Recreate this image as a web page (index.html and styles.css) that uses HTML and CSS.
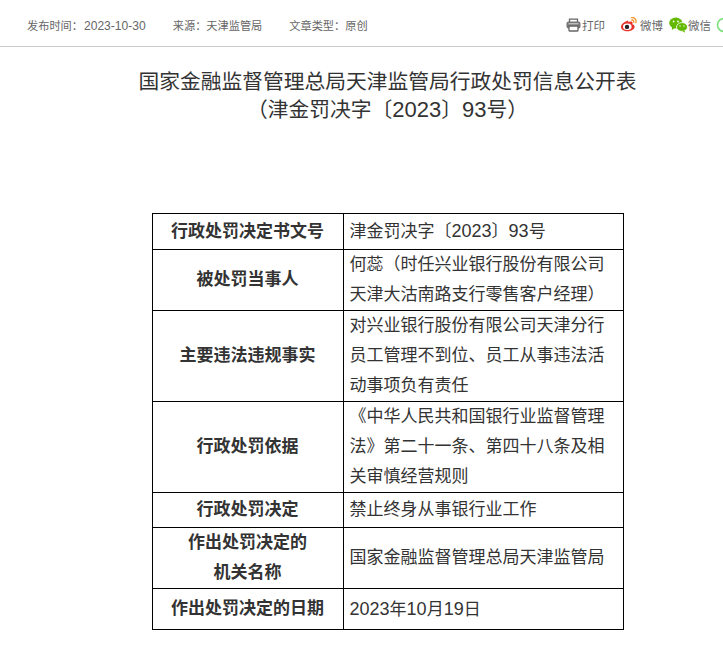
FILE: index.html
```html
<!DOCTYPE html>
<html lang="zh">
<head>
<meta charset="utf-8">
<title>行政处罚信息公开表</title>
<link rel="stylesheet" href="styles.css">
</head>
<body>
<header class="bar">
  <div class="meta">
    <span>发布时间：<span class="num">2023-10-30</span></span>
    <span>来源：天津监管局</span>
    <span>文章类型：原创</span>
  </div>
  <div class="share">
    <span class="share-item print">
      <svg width="15" height="14" viewBox="0 0 15 14"><path d="M3.500 4V1.200h8V4" fill="none" stroke="#666" stroke-width="1.300"/><rect x=".5" y="3.500" width="14" height="7" rx="2" fill="#777"/><rect x="3" y="8" width="9" height="5" rx=".5" fill="#fff" stroke="#666" stroke-width="1.300"/><rect x="2.500" y="5.300" width="10" height="1" fill="#ddd"/></svg>打印
    </span>
    <span class="share-item weibo">
      <svg width="18" height="15" viewBox="0 1.500 18 15"><path d="M7.500 5.200C4.200 6 1 8.800 1 11.400c0 2.500 3 4.300 6.600 4.300 4 0 7-2.200 7-4.500 0-1.400-1.200-2.200-2.300-2.500.4-1 .4-1.900-.2-2.400-1-.8-2.800-.3-4 .3.300-1 .2-1.800-.6-1.400z" fill="#e6342a"/><ellipse cx="7.300" cy="11.300" rx="4.300" ry="3.300" fill="#fff"/><circle cx="7" cy="11.400" r="2.200" fill="#222"/><path d="M11.500 2c2.800-.3 5 2 4.500 5M11.800 4.500c1.300-.2 2.200.9 2 2.200" fill="none" stroke="#f29a38" stroke-width="1.400" stroke-linecap="round"/></svg>微博
    </span>
    <span class="share-item wechat">
      <svg width="19" height="16" viewBox="0 0 19 16"><ellipse cx="6.800" cy="6" rx="6.600" ry="5.400" fill="#62b900"/><path d="M3 9.500 2.800 13l3.200-2z" fill="#62b900"/><ellipse cx="13" cy="10" rx="5.500" ry="4.400" fill="#62b900" stroke="#fff" stroke-width=".8"/><path d="M15.500 13.500l.6 2.200-2.800-1.600z" fill="#62b900"/><circle cx="4.600" cy="4.500" r=".9" fill="#fff"/><circle cx="9" cy="4.500" r=".9" fill="#fff"/><circle cx="11" cy="9" r=".7" fill="#fff"/><circle cx="15" cy="9" r=".7" fill="#fff"/></svg>微信
    </span>
    <svg class="ic-friends" width="16" height="16" viewBox="0 0 16 16"><circle cx="8" cy="8" r="6.500" fill="#fff" stroke="#7be07b" stroke-width="1.600"/></svg>
  </div>
</header>
<h1 class="title">国家金融监督管理总局天津监管局行政处罚信息公开表<br>（津金罚决字〔<span class="num">2023</span>〕<span class="num">93</span>号）</h1>
<table class="info">
  <tr class="h36"><th>行政处罚决定书文号</th><td>津金罚决字〔<span class="num">2023</span>〕<span class="num">93</span>号</td></tr>
  <tr class="h61"><th>被处罚当事人</th><td>何蕊（时任兴业银行股份有限公司<br>天津大沽南路支行零售客户经理）</td></tr>
  <tr class="h91"><th>主要违法违规事实</th><td>对兴业银行股份有限公司天津分行<br>员工管理不到位、员工从事违法活<br>动事项负有责任</td></tr>
  <tr class="h91"><th>行政处罚依据</th><td>《中华人民共和国银行业监督管理<br>法》第二十一条、第四十八条及相<br>关审慎经营规则</td></tr>
  <tr class="h35"><th>行政处罚决定</th><td>禁止终身从事银行业工作</td></tr>
  <tr class="h61"><th>作出处罚决定的<br>机关名称</th><td>国家金融监督管理总局天津监管局</td></tr>
  <tr class="h41"><th>作出处罚决定的日期</th><td><span class="num">2023</span>年<span class="num">10</span>月<span class="num">19</span>日</td></tr>
</table>
</body>
</html>
```
FILE: styles.css
```css
html, body {
  margin: 0;
  padding: 0;
  background: #fff;
  overflow: hidden;
}
body {
  width: 723px;
  height: 669px;
  font-family: "Liberation Sans", "Noto Sans CJK SC", sans-serif;
  color: #333;
}
.num {
  font-size: 1.06em;
}
.bar {
  box-sizing: border-box;
  height: 47px;
  border-bottom: 1px solid #ccc;
  display: flex;
  align-items: center;
  justify-content: space-between;
  padding: 3px 0 0 27px;
  font-size: 11.2px;
  color: #666;
}
.meta {
  display: flex;
  gap: 27px;
}
.meta .num {
  font-size: 1.08em;
  margin-left: 1px;
}
.share {
  display: flex;
  align-items: center;
  font-size: 11.5px;
  color: #666;
  margin-right: -9px;
}
.share-item {
  display: flex;
  align-items: center;
}
.print {
  gap: 1px;
  margin-right: 15px;
}
.weibo {
  gap: 2px;
  margin-right: 6px;
}
.wechat {
  gap: 0;
  margin-right: 5px;
}
.ic-friends {
  flex: none;
}
.title {
  margin: 21px 0 0;
  padding-left: 52px;
  font-size: 20.75px;
  font-weight: 400;
  line-height: 28px;
  text-align: center;
  color: #333;
}
.info {
  border-collapse: collapse;
  table-layout: fixed;
  width: 472px;
  margin: 89px 0 0 152px;
  font-size: 17px;
  color: #333;
}
.info th, .info td {
  border: 1px solid #000;
  padding: 0;
  line-height: 30px;
}
.info th {
  width: 189px;
  font-weight: 700;
  text-align: center;
  padding-right: 1px;
}
.info td {
  padding-left: 5.500px;
  text-align: left;
}
.h36 { height: 36px; }
.h35 { height: 35px; }
.h41 { height: 41px; }
.h61 { height: 61px; }
.h91 { height: 91px; }
```
